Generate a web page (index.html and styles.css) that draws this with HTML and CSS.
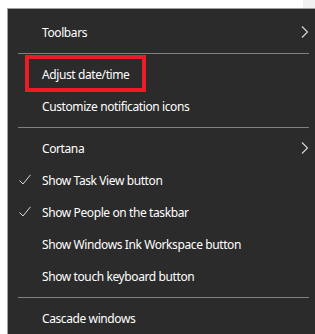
FILE: index.html
```html
<!DOCTYPE html>
<html lang="en">
<head>
    <meta charset="UTF-8">
    <meta name="viewport" content="width=device-width, initial-scale=1.0">
    <title>Taskbar menu</title>
    <link rel="stylesheet" href="styles.css">
</head>
<body>
    <div class="top-strip">
        <div class="top-strip-end"></div>
    </div>

    <div class="menu">
        <div class="item">
            <span class="label">Toolbars</span>
            <svg class="chevron" width="8" height="12" viewBox="0 0 8 12">
                <path d="M1 0.5 L6.5 6 L1 11.5" fill="none" stroke="#d9d9d9" stroke-width="1.1"/>
            </svg>
        </div>

        <div class="separator"></div>

        <div class="item">
            <span class="label">Adjust date/time</span>
            <span class="highlight"></span>
        </div>
        <div class="item">
            <span class="label">Customize notification icons</span>
        </div>

        <div class="separator"></div>

        <div class="item">
            <span class="label">Cortana</span>
            <svg class="chevron" width="8" height="12" viewBox="0 0 8 12">
                <path d="M1 0.5 L6.5 6 L1 11.5" fill="none" stroke="#d9d9d9" stroke-width="1.1"/>
            </svg>
        </div>
        <div class="item">
            <svg class="check" width="12" height="11" viewBox="0 0 12 11">
                <path d="M0.5 6.5 L4 10 L11.5 0.8" fill="none" stroke="#d9d9d9" stroke-width="1"/>
            </svg>
            <span class="label">Show Task View button</span>
        </div>
        <div class="item">
            <svg class="check" width="12" height="11" viewBox="0 0 12 11">
                <path d="M0.5 6.5 L4 10 L11.5 0.8" fill="none" stroke="#d9d9d9" stroke-width="1"/>
            </svg>
            <span class="label">Show People on the taskbar</span>
        </div>
        <div class="item">
            <span class="label">Show Windows Ink Workspace button</span>
        </div>
        <div class="item">
            <span class="label">Show touch keyboard button</span>
        </div>

        <div class="separator"></div>

        <div class="item">
            <span class="label">Cascade windows</span>
        </div>
    </div>
</body>
</html>
```

FILE: styles.css
```css
html, body {
    height: 100%;
}

body {
    margin: 0;
    display: flex;
    flex-direction: column;
    background-color: #ffffff;
    font-family: 'Noto Sans', 'Open Sans', sans-serif;
    font-size: 12px;
    letter-spacing: -0.4px;
    color: #ffffff;
    overflow: hidden;
}

.top-strip {
    height: 8px;
    flex-shrink: 0;
    display: flex;
    justify-content: flex-end;
}

.top-strip-end {
    width: 12px;
    background-color: #f0f0f0;
}

.menu {
    flex: 1;
    min-height: 0;
    margin-left: 7px;
    border-top: 1px solid #a0a0a0;
    border-left: 1px solid #a0a0a0;
    background-color: #2b2b2b;
    padding-top: 7px;
    overflow: hidden;
}

.item {
    position: relative;
    height: 32px;
    display: flex;
    align-items: center;
    padding-left: 34px;
}

.label {
    white-space: nowrap;
}

.chevron {
    position: absolute;
    right: 6px;
    top: 10px;
}

.check {
    position: absolute;
    left: 11px;
    top: 10px;
}

.separator {
    height: 1px;
    margin: 5px 6px 4px 10px;
    background-color: #808080;
}

.highlight {
    position: absolute;
    left: 17px;
    top: -3px;
    width: 113px;
    height: 29px;
    border: 4px solid #ed1c24;
}
```
